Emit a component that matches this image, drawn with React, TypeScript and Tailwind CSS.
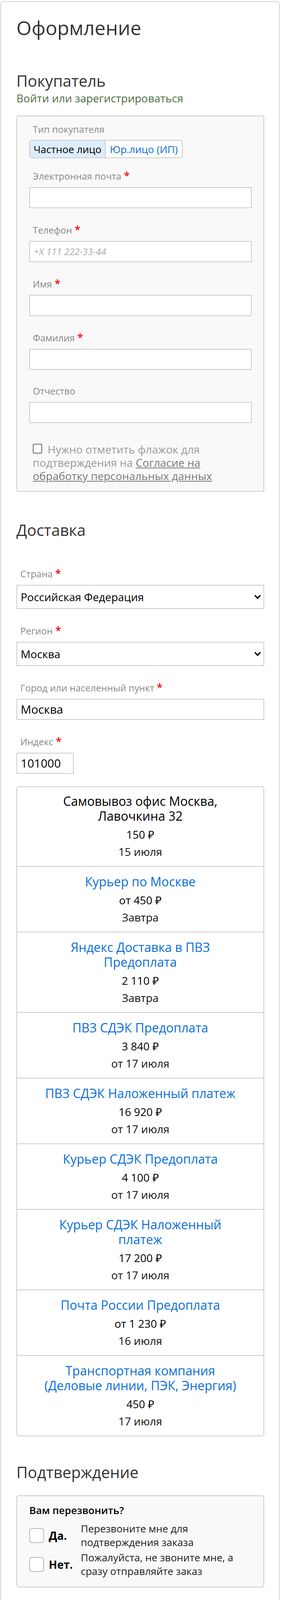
import React from "react";

const Req = () => <span className="text-[#f21b1b] font-bold text-[26px] leading-[20px]"> *</span>;

function FieldLabel({ text, req, first, inset }: { text: string; req?: boolean; first?: boolean; inset: string }) {
  return (
    <div className={`${first ? "mt-[30px]" : "mt-[40px]"} ${inset} h-[32px] text-[24px] leading-[32px] text-[#888] whitespace-nowrap`}>
      {text}
      {req && <Req />}
    </div>
  );
}

function TextBox({ children, className = "" }: { children?: React.ReactNode; className?: string }) {
  return (
    <div className={`mt-[12px] h-[54px] border-2 border-[#cccccc] bg-white flex items-center pl-[9px] ${className}`}>
      {children}
    </div>
  );
}

function Chevron() {
  return (
    <svg width="16" height="11" viewBox="0 0 16 11" className="shrink-0">
      <polyline points="2,2 8,8.5 14,2" fill="none" stroke="#111" strokeWidth="3.6" strokeLinecap="round" strokeLinejoin="round" />
    </svg>
  );
}

function SelectBox({ value }: { value: string }) {
  return (
    <div className="mt-[12px] h-[62px] border-2 border-[#cccccc] bg-white flex items-center justify-between pl-[9px] pr-[7px] text-[28px] leading-[36px] text-black">
      <span>{value}</span>
      <Chevron />
    </div>
  );
}

type Opt = { title: React.ReactNode; lines: number; price: string; date: string; black?: boolean };

const options: Opt[] = [
  { title: <>Самовывоз офис Москва,<br />Лавочкина 32</>, lines: 2, price: "150 ₽", date: "15 июля", black: true },
  { title: "Курьер по Москве", lines: 1, price: "от 450 ₽", date: "Завтра" },
  { title: <>Яндекс Доставка в ПВЗ<br />Предоплата</>, lines: 2, price: "2 110 ₽", date: "Завтра" },
  { title: "ПВЗ СДЭК Предоплата", lines: 1, price: "3 840 ₽", date: "от 17 июля" },
  { title: "ПВЗ СДЭК Наложенный платеж", lines: 1, price: "16 920 ₽", date: "от 17 июля" },
  { title: "Курьер СДЭК Предоплата", lines: 1, price: "4 100 ₽", date: "от 17 июля" },
  { title: <>Курьер СДЭК Наложенный<br />платеж</>, lines: 2, price: "17 200 ₽", date: "от 17 июля" },
  { title: "Почта России Предоплата", lines: 1, price: "от 1 230 ₽", date: "16 июля" },
  { title: <>Транспортная компания<br />(Деловые линии, ПЭК, Энергия)</>, lines: 2, price: "450 ₽", date: "17 июля" },
];

function CallRow({ label, desc, className = "" }: { label: string; desc: React.ReactNode; className?: string }) {
  return (
    <div className={`flex items-center h-[70px] ${className}`}>
      <div className="w-[38px] h-[38px] border-2 border-[#b8b8b8] rounded-[7px] bg-white shrink-0" />
      <div className="w-[82px] ml-[12px] text-[28px] leading-[35px] font-bold text-black shrink-0">{label}</div>
      <div className="text-[26px] leading-[35px] text-[#222] whitespace-nowrap">{desc}</div>
    </div>
  );
}

export default function App() {
  return (
    <div className="w-[720px] bg-white font-['Open_Sans','Noto_Sans',sans-serif] text-[#111]">
      <div className="pt-[3px] pl-[1px]">
        <div className="w-[716px] border-2 border-[#d4d4d4] rounded-[8px] pl-[39px] pr-[38px] pt-[36px] pb-[78px]">
          <h1 className="h-[60px] text-[50px] leading-[60px] text-[#333]">Оформление</h1>

          <h2 className="mt-[84px] h-[44px] text-[40px] leading-[44px] text-[#333]">Покупатель</h2>
          <div className="mt-[4px] h-[36px] text-[28px] leading-[36px] text-[#4a6e3e]">Войти или зарегистрироваться</div>

          <div className="mt-[27px] border-2 border-[#cccccc] rounded-[4px] bg-[#f9f9f9] pt-[17px] pb-[22px] pl-[31px] pr-[30px]">
            <div className="pl-[9px] h-[32px] text-[24px] leading-[32px] text-[#888]">Тип покупателя</div>
            <div className="mt-[11px] flex w-[393px] h-[47px] border-2 border-[#cccccc] rounded-[6px] overflow-hidden bg-white">
              <div className="w-[194px] bg-[#ddedfc] border-r-2 border-[#cccccc] flex items-center justify-center text-[26px] leading-[34px] text-black">Частное лицо</div>
              <div className="w-[195px] flex items-center justify-center text-[26px] leading-[34px] text-[#0b6ed8]">Юр.лицо (ИП)</div>
            </div>

            <FieldLabel text="Электронная почта" req first inset="pl-[9px]" />
            <TextBox />
            <FieldLabel text="Телефон" req inset="pl-[9px]" />
            <TextBox>
              <span className="text-[24px] leading-[32px] italic text-[#aaa]">+X 111 222-33-44</span>
            </TextBox>
            <FieldLabel text="Имя" req inset="pl-[9px]" />
            <TextBox />
            <FieldLabel text="Фамилия" req inset="pl-[9px]" />
            <TextBox />
            <div className="mt-[38px] pl-[9px] h-[32px] text-[24px] leading-[32px] text-[#888]">Отчество</div>
            <TextBox />

            <p className="mt-[50px] h-[102px] pl-[9px] text-[28px] leading-[34px] text-[#9a9a9a] whitespace-nowrap">
              <span className="inline-block w-[24px] h-[25px] border-2 border-[#666] rounded-[4px] bg-white mr-[14px] align-baseline" />
              Нужно отметить флажок для
              <br />
              подтверждения на{" "}
              <a className="underline text-[#7a7a7a]">
                Согласие на
                <br />
                обработку персональных данных
              </a>
            </p>
          </div>

          <h2 className="mt-[76px] h-[44px] text-[40px] leading-[44px] text-[#333]">Доставка</h2>

          <div className="mt-[74px] pl-[10px] h-[32px] text-[24px] leading-[32px] text-[#888] whitespace-nowrap">
            Страна<Req />
          </div>
          <SelectBox value="Российская Федерация" />
          <FieldLabel text="Регион" req inset="pl-[10px]" />
          <SelectBox value="Москва" />
          <FieldLabel text="Город или населенный пункт" req inset="pl-[10px]" />
          <TextBox>
            <span className="text-[30px] leading-[38px] text-black">Москва</span>
          </TextBox>
          <FieldLabel text="Индекс" req inset="pl-[10px]" />
          <TextBox className="w-[147px]">
            <span className="text-[30px] leading-[38px] text-black">101000</span>
          </TextBox>

          <div className="mt-[32px] border-2 border-[#cccccc] rounded-[6px] divide-y-2 divide-[#cccccc]">
            {options.map((o, i) => (
              <div key={i} className={`${i === 0 ? "pt-[17px]" : "pt-[19px]"} pb-[15px] text-center`}>
                <div
                  className={`${o.lines === 2 ? "h-[76px]" : "h-[38px]"} text-[32px] leading-[38px] ${o.black ? "text-black" : "text-[#0b6ed8]"}`}
                >
                  {o.title}
                </div>
                <div className="mt-[6px] h-[44px] text-[28px] leading-[44px] text-black">{o.price}</div>
                <div className="h-[44px] text-[28px] leading-[44px] text-[#111]">{o.date}</div>
              </div>
            ))}
          </div>

          <h2 className="mt-[70px] h-[44px] text-[40px] leading-[44px] text-[#333]">Подтверждение</h2>

          <div className="mt-[37px] border-2 border-[#cccccc] rounded-[6px] bg-[#f9f9f9] pt-[19px] pb-[22px] pl-[31px] pr-[30px]">
            <div className="h-[34px] text-[26px] leading-[34px] font-semibold text-black">Вам перезвонить?</div>
            <CallRow className="mt-[13px]" label="Да." desc={<>Перезвоните мне для<br />подтверждения заказа</>} />
            <CallRow className="mt-[4px]" label="Нет." desc={<>Пожалуйста, не звоните мне, а<br />сразу отправляйте заказ</>} />
          </div>

          <div className="mt-[33px] h-[36px] flex items-center">
            <svg width="22" height="15" viewBox="0 0 22 15" className="shrink-0">
              <polyline points="1.5,2 11,13 20.5,2" fill="none" stroke="#777" strokeWidth="2" />
            </svg>
            <span className="ml-[10px] text-[28px] leading-[36px] text-[#6b9061]">Комментарий к заказу</span>
          </div>
          <div className="mt-[24px] h-[162px] border-2 border-[#cccccc] bg-white relative">
            <svg width="8" height="8" viewBox="0 0 8 8" className="absolute right-[2px] bottom-[2px]">
              <line x1="7" y1="1" x2="1" y2="7" stroke="#999" strokeWidth="1" />
              <line x1="7" y1="4" x2="4" y2="7" stroke="#999" strokeWidth="1" />
            </svg>
          </div>

          <div className="mt-[91px] h-[2px] bg-[#e2e2e2]" />

          <div className="mt-[99px] h-[36px] flex justify-between text-[28px] leading-[36px]">
            <span className="text-[#888]">Стоимость товаров</span>
            <span className="text-[#111]">182 960 ₽</span>
          </div>
          <div className="mt-[17px] h-[36px] flex justify-between text-[28px] leading-[36px]">
            <span className="text-[#888]">Стоимость доставки</span>
            <span className="text-[#111]">не выбрано</span>
          </div>
          <div className="mt-[29px] h-[68px] flex justify-between items-start">
            <span className="text-[28px] leading-[34px] text-black">
              Итого без учета
              <br />
              доставки
            </span>
            <span className="h-[56px] text-[48px] leading-[56px] text-black">182 960 ₽</span>
          </div>

          <button className="mt-[31px] w-full h-[92px] rounded-[10px] bg-[#658a5e] text-white text-[36px] leading-[44px] flex items-center justify-center">
            Выбрать доставку
          </button>
        </div>
      </div>

      <p className="mt-[41px] h-[102px] px-[39px] text-[26px] leading-[34px] text-[#111] whitespace-nowrap">
        Оформляя заказ, вы соглашаетесь на обработку
        <br />
        персональных данных в соответствии с{" "}
        <a className="underline text-[#4c6f42]">
          политикой
          <br />
          обработки персональных данных
        </a>
        .
      </p>
      <div className="mt-[40px] h-[3px] bg-[#e6e6e6]" />
    </div>
  );
}
